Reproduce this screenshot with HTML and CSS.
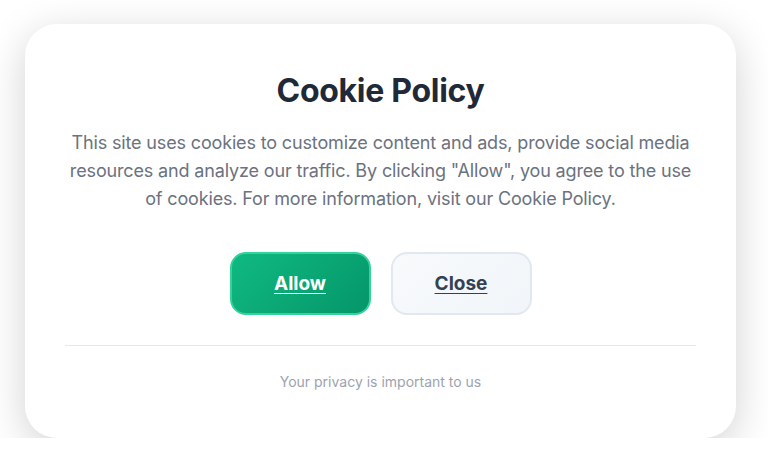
FILE: index.html
```html
<!DOCTYPE html>
<html lang="en">
<head>
    <meta charset="UTF-8">
    <meta name="viewport" content="width=device-width, initial-scale=1.0">
    <title>Cookie Policy</title>
    <link rel="stylesheet" href="styles.css">
</head>
<body>
    <div class="cookie-card">
        <h1 class="cookie-title">Cookie Policy</h1>
        <p class="cookie-text">This site uses cookies to customize content and ads, provide social media resources and analyze our traffic. By clicking "Allow", you agree to the use of cookies. For more information, visit our Cookie Policy.</p>

        <div class="cookie-actions">
            <button class="btn btn-allow">Allow</button>
            <button class="btn btn-close">Close</button>
        </div>

        <div class="cookie-footer">Your privacy is important to us</div>
    </div>
</body>
</html>
```

FILE: styles.css
```css
* {
    box-sizing: border-box;
}
body {
    margin: 0;
    padding: 24px 0 0 25px;
    background: #ffffff;
    font-family: Inter, "Noto Sans", Arial, sans-serif;
}
.cookie-card {
    width: 711px;
    height: 414px;
    background: #ffffff;
    border-radius: 32px;
    box-shadow: 0 10px 40px rgba(0, 0, 0, 0.18);
    padding: 47px 38px 0;
    text-align: center;
}
.cookie-title {
    margin: 0 0 18px;
    font-size: 32px;
    line-height: 40px;
    font-weight: 700;
    color: #1f2937;
    letter-spacing: -0.3px;
}
.cookie-text {
    margin: 0;
    font-size: 18px;
    line-height: 28px;
    color: #6b7280;
    letter-spacing: -0.15px;
}
.cookie-actions {
    display: flex;
    justify-content: center;
    gap: 20px;
    margin: 39px 2px 0;
    padding-bottom: 30px;
    border-bottom: 1px solid #e5e7eb;
}
.btn {
    width: 141px;
    height: 63px;
    border-radius: 16px;
    font-family: inherit;
    font-size: 19px;
    font-weight: 700;
    text-decoration: underline;
    text-underline-offset: 3px;
    cursor: pointer;
}
.btn-allow {
    background: linear-gradient(135deg, #10b981, #059669);
    border: 2px solid #34d399;
    color: #ffffff;
}
.btn-close {
    background: linear-gradient(135deg, #f8fafc, #f1f5f9);
    border: 2px solid #e2e8f0;
    color: #334155;
}
.cookie-footer {
    margin-top: 26px;
    font-size: 14px;
    line-height: 20px;
    color: #9ca3af;
}
```
